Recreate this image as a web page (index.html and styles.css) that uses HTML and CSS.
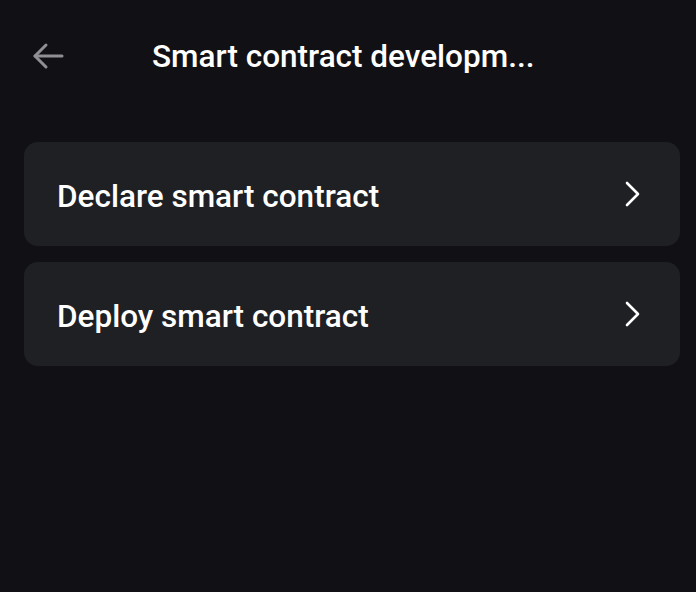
FILE: index.html
```html
<!DOCTYPE html>
<html>
<head>
<meta charset="utf-8">
<link rel="stylesheet" href="styles.css">
</head>
<body>
<div class="screen">
  <header class="header">
    <button class="back" aria-label="Back">
      <svg width="32" height="28" viewBox="0 0 32 28" fill="none" stroke="#8f8f94" stroke-width="3" stroke-linecap="round" stroke-linejoin="round">
        <path d="M30 14H3"/>
        <path d="M14 3L3 14L14 25"/>
      </svg>
    </button>
    <h1 class="title">Smart contract developm...</h1>
  </header>
  <nav class="list">
    <a class="item" href="#">
      <span class="label">Declare smart contract</span>
      <svg class="chev" width="16" height="26" viewBox="0 0 16 26" fill="none" stroke="#ffffff" stroke-width="2.6" stroke-linecap="round" stroke-linejoin="round">
        <path d="M2 2L13 13L2 24"/>
      </svg>
    </a>
    <a class="item" href="#">
      <span class="label">Deploy smart contract</span>
      <svg class="chev" width="16" height="26" viewBox="0 0 16 26" fill="none" stroke="#ffffff" stroke-width="2.6" stroke-linecap="round" stroke-linejoin="round">
        <path d="M2 2L13 13L2 24"/>
      </svg>
    </a>
  </nav>
</div>
</body>
</html>
```

FILE: styles.css
```css
* { box-sizing: border-box; }
html, body {
  margin: 0;
  padding: 0;
  background: #111115;
  height: 100%;
}
body {
  font-family: Roboto, "Liberation Sans", sans-serif;
  color: #ffffff;
}
.screen {
  display: flex;
  flex-direction: column;
  padding: 0 16px 0 24px;
}
.header {
  display: flex;
  align-items: center;
  height: 112px;
}
.back {
  background: none;
  border: 0;
  padding: 0;
  margin-left: 8px;
  width: 32px;
  height: 28px;
  display: flex;
  cursor: pointer;
}
.title {
  margin: 0 0 0 88px;
  font-size: 31.5px;
  font-weight: 500;
  white-space: nowrap;
}
.list {
  display: flex;
  flex-direction: column;
  gap: 16px;
  margin-top: 30px;
}
.item {
  display: flex;
  align-items: center;
  justify-content: space-between;
  height: 104px;
  padding: 4px 39px 0 33px;
  background: #1f2024;
  border-radius: 14px;
  color: #ffffff;
  text-decoration: none;
}
.label {
  font-size: 31.5px;
  font-weight: 500;
}
.chev { display: block; margin-top: -4px; }
```
